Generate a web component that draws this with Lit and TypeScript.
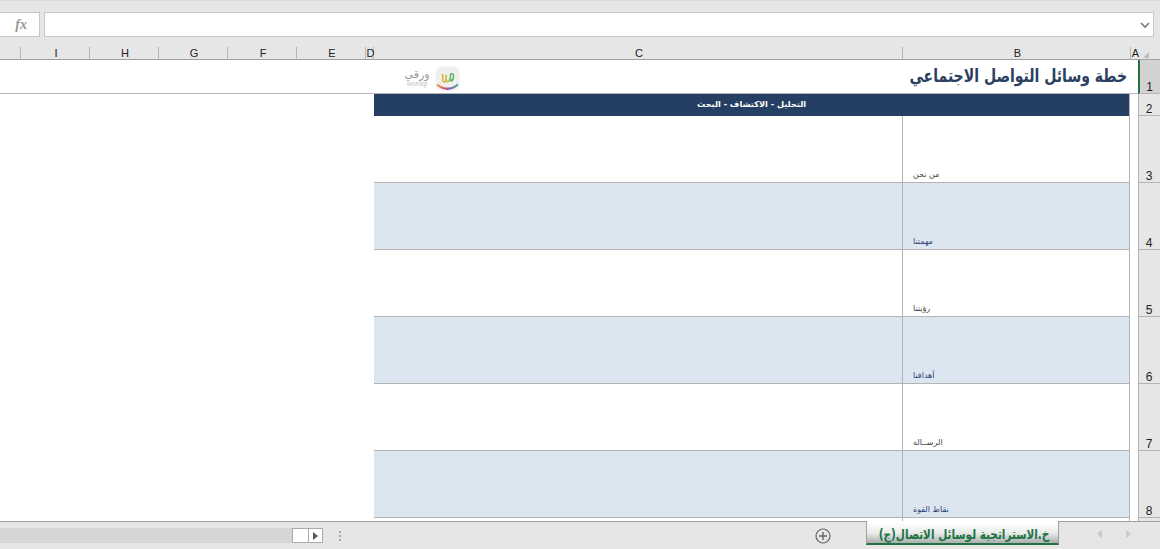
import { LitElement, html, css, svg } from "lit";
import { customElement } from "lit/decorators.js";

const COLS: [string, number][] = [
  ["", 21], ["I", 69], ["H", 69], ["G", 69], ["F", 69], ["E", 69], ["D", 8], ["C", 529], ["B", 228], ["A", 7],
];
const ROWS = ["من نحن", "مهمتنا", "رؤيتنا", "أهدافنا", "الرســالة", "نقاط القوة"];

@customElement("app-root")
export class AppRoot extends LitElement {
  static styles = css`
    :host { display: flex; flex-direction: column; width: 1160px; height: 549px; overflow: hidden; background: #e6e6e6; font-family: "Liberation Sans", Arial, sans-serif; color: #222; }
    .formula { display: flex; gap: 4px; height: 37px; padding-top: 11px; box-sizing: border-box; flex: none; border-top: 1px solid #dcdcdc; }
    .namebox { width: 40px; height: 25px; background: #fff; border: 1px solid #c6c6c6; border-left: 0; box-sizing: border-box; display: flex; align-items: center; justify-content: flex-end; padding-right: 12px; font: italic bold 14px "Liberation Serif", serif; color: #999; }
    .input { width: 1110px; height: 25px; background: #fff; border: 1px solid #c6c6c6; box-sizing: border-box; display: flex; align-items: center; justify-content: flex-end; padding-right: 3px; }
    .colhead { display: flex; height: 23px; flex: none; border-bottom: 1px solid #9f9f9f; box-sizing: border-box; padding-top: 10px; }
    .col { box-sizing: border-box; border-right: 1px solid #b5b5b5; font-size: 11px; line-height: 12px; text-align: center; color: #222; white-space: nowrap; display: flex; justify-content: center; padding-left: 2px; }
    .col.last { border-right: 0; }
    .corner { width: 22px; position: relative; }
    .corner i { position: absolute; left: 5px; top: 5px; width: 0; height: 0; border-bottom: 6px solid #bdbdbd; border-left: 6px solid transparent; }
    .sheet { flex: 1; min-height: 0; overflow: hidden; display: grid; grid-template-columns: 374px 529px 226px 1px 8px 22px; grid-auto-rows: 67px; grid-template-rows: 34px 22px; background: #fff; }
    .b { border-bottom: 1px solid #b4b4b4; box-sizing: border-box; }
    .rowhd { background: #e6e6e6; border-bottom: 1px solid #b5b5b5; border-left: 1px solid #b5b5b5; box-sizing: border-box; font-size: 12px; display: flex; align-items: flex-end; justify-content: center; padding-right: 1px; line-height: 12px; color: #222; }
    .rowhd.on { background: #d2d2d2; border-left: 2px solid #217346; }
    .title { grid-column: 3 / 6; min-width: 0; display: flex; justify-content: flex-end; }
    .titleText { flex: none; direction: rtl; white-space: nowrap; font: bold 18px "DejaVu Sans", sans-serif; color: #2a4060; margin-right: 11px; line-height: 32px; transform: scaleX(0.78); transform-origin: right center; }
    .titlefill { grid-column: 1; }
    .logoCell { display: flex; align-items: center; gap: 5px; padding-left: 30px; padding-top: 3px; }
    .logoText { width: 26px; color: #9a9a9a; text-align: center; }
    .logoText b { display: block; font: 11px/11px "DejaVu Sans", sans-serif; }
    .logoText span { display: block; font-size: 7px; line-height: 8px; color: #c4c4c4; }
    .head { grid-column: 2 / 4; background: #243f63; color: #fff; direction: rtl; text-align: center; font: bold 8.2px/20px "DejaVu Sans", sans-serif; }
    .sep { background: #b4b4b4; }
    .cellC { border-right: 1px solid #b4b4b4; }
    .cellB { display: flex; align-items: flex-end; padding: 0 0 1px 10px; direction: rtl; justify-content: flex-end; font: 8px/13px "DejaVu Sans", sans-serif; color: #444; }
    .blue { background: #dce6f1; }
    .blue.cellB { color: #2a4270; }
    .tabs { height: 28px; flex: none; border-top: 1px solid #9f9f9f; box-sizing: border-box; display: flex; align-items: flex-start; }
    .scroll { display: flex; width: 323px; height: 15px; margin-top: 6px; background: #d6d6d6; }
    .track { flex: 1; }
    .thumb { width: 17px; background: #fff; border: 1px solid #ababab; box-sizing: border-box; }
    .arrowBtn { width: 14px; background: #fff; border: 1px solid #ababab; border-left: 0; box-sizing: border-box; display: flex; align-items: center; justify-content: center; }
    .arrowBtn i { border-left: 5px solid #555; border-top: 4px solid transparent; border-bottom: 4px solid transparent; }
    .dots { display: flex; flex-direction: column; gap: 2px; margin: 9px 0 0 16px; }
    .dots i { width: 2px; height: 2px; background: #aaa; }
    .plus { margin: 5px 0 0 473px; width: 18px; height: 18px; }
    .tab { margin: -1px 0 0 34px; width: 193px; height: 24px; box-sizing: border-box; border: 1px solid #9f9f9f; border-top: 0; border-bottom: 2px solid #217346; background: linear-gradient(#ffffff 10%, #e8ebe9 55%, #a9aeae); display: flex; justify-content: center; overflow: hidden; padding-left: 4px; }
    .tabText { flex: none; color: #217346; direction: rtl; font: bold 13.5px/26px "DejaVu Sans", sans-serif; white-space: nowrap; transform: scaleX(0.775); }
    .nav { display: flex; gap: 24px; margin: 8px 0 0 38px; }
    .nav i { border-top: 4px solid transparent; border-bottom: 4px solid transparent; }
    .nav .l { border-right: 5px solid #c9c9c9; }
    .nav .r { border-left: 5px solid #c9c9c9; }
  `;

  private logo() {
    return html`<svg width="25" height="25" viewBox="0 0 25 25">
      <defs><linearGradient id="arc"><stop offset="0" stop-color="#e8a03a"></stop><stop offset="0.35" stop-color="#d8506a"></stop><stop offset="0.6" stop-color="#8a5fc0"></stop><stop offset="1" stop-color="#45b08a"></stop></linearGradient></defs>
      <rect x="0.5" y="0.5" width="24" height="24" rx="6" fill="#f0f0ee"></rect>
      ${svg`<path d="M7.5 8 L8 15 Q9 17 10.5 15.5 L11 13" fill="none" stroke="#e8b23a" stroke-width="1.6"></path>
      <path d="M11 9 L11.2 14 Q12.5 17 14 15 L14.5 13" fill="none" stroke="#b8c24a" stroke-width="1.6"></path>
      <path d="M15.5 8 Q19 7 18.5 11 Q18 15 16 15 Q15 12 15.5 8 Z" fill="none" stroke="#5ab86a" stroke-width="1.6"></path>
      <path d="M2 18.5 Q12.5 27 23 18.5" fill="none" stroke="url(#arc)" stroke-width="2.2"></path>`}
    </svg>`;
  }

  render() {
    return html`
      <div class="formula">
        <div class="namebox">fx</div>
        <div class="input">
          <svg width="10" height="8" viewBox="0 0 10 8"><path d="M1 2 L5 6 L9 2" fill="none" stroke="#777" stroke-width="1.6"></path></svg>
        </div>
      </div>
      <div class="colhead">
        ${COLS.map(([n, w], i) => html`<div class="col ${i === COLS.length - 1 ? "last" : ""}" style="width:${w}px">${n}</div>`)}
        <div class="corner"><i></i></div>
      </div>
      <div class="sheet">
        <div class="b titlefill"></div>
        <div class="b logoCell">
          <div class="logoText"><b>ورقي</b><span>wordqi</span></div>
          ${this.logo()}
        </div>
        <div class="b title"><div class="titleText">خطة وسائل التواصل الاجتماعي</div></div>
        <div class="rowhd on">1</div>

        <div></div>
        <div class="head">التحليل - الاكتشاف - البحث</div>
        <div class="sep"></div><div></div>
        <div class="rowhd">2</div>

        ${ROWS.map((label, i) => {
          const blue = i % 2 === 1 ? "blue" : "";
          return html`
            <div></div>
            <div class="b cellC ${blue}"></div>
            <div class="b cellB ${blue}">${label}</div>
            <div class="sep"></div><div></div>
            <div class="rowhd">${i + 3}</div>`;
        })}
        <div></div><div class="cellC"></div><div></div><div class="sep"></div><div></div><div class="rowhd"></div>
      </div>
      <div class="tabs">
        <div class="scroll"><div class="track"></div><div class="thumb"></div><div class="arrowBtn"><i></i></div></div>
        <div class="dots"><i></i><i></i><i></i></div>
        <svg class="plus" viewBox="0 0 18 18"><circle cx="9" cy="9" r="7" fill="none" stroke="#666" stroke-width="1.2"></circle><path d="M9 5 V13 M5 9 H13" stroke="#666" stroke-width="1.4"></path></svg>
        <div class="tab"><div class="tabText">خ.الاستراتجية لوسائل الاتصال(ج)</div></div>
        <div class="nav"><i class="l"></i><i class="r"></i></div>
      </div>
    `;
  }
}
